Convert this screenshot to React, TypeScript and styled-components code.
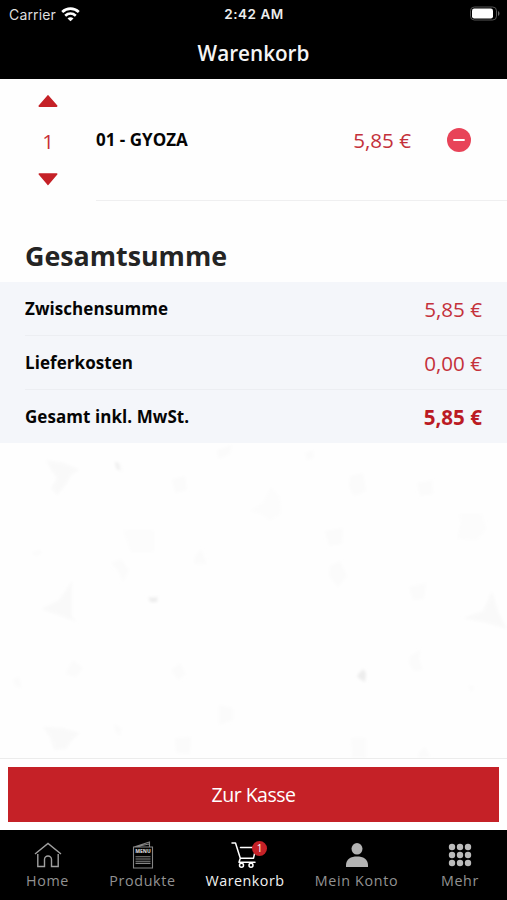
import React from "react";
import styled, { createGlobalStyle } from "styled-components";

const GlobalStyle = createGlobalStyle`
  * { box-sizing: border-box; }
  body { margin: 0; background: #fefefe; }
`;

const Screen = styled.div`
  width: 507px;
  height: 900px;
  display: flex;
  flex-direction: column;
  overflow: hidden;
  background: #fefefe;
  font-family: "Open Sans", sans-serif;
  color: #050505;
`;

const Header = styled.header`
  height: 79px;
  flex: none;
  background: #000;
  color: #fff;
`;

const StatusBar = styled.div`
  height: 27px;
  padding: 0 7px 0 9px;
  display: grid;
  grid-template-columns: 1fr auto 1fr;
  align-items: center;
  font: 14px/27px Inter, sans-serif;
`;

const Carrier = styled.span`
  display: flex;
  align-items: center;
  gap: 5px;
  color: #dedede;
  letter-spacing: 0.15px;
`;

const Clock = styled.span`
  padding: 1px 1px 0 0;
  font-weight: 600;
  font-size: 13.5px;
  letter-spacing: 0.55px;
  color: #ececec;
`;

const Battery = styled.svg`
  justify-self: end;
`;

const Title = styled.h1`
  margin: 0;
  height: 52px;
  text-align: center;
  font-size: 20.7px;
  font-weight: 600;
  line-height: 53px;
  color: #f5f5f5;
`;

const CartItem = styled.section`
  height: 122px;
  flex: none;
  display: flex;
  background: #fefefe;
`;

const Stepper = styled.div`
  width: 96px;
  display: flex;
  flex-direction: column;
  align-items: center;
  padding-top: 15px;
`;

const ArrowButton = styled.button`
  width: 22px;
  height: 14px;
  padding: 0;
  border: 0;
  background: none;
  display: flex;
  justify-content: center;
  align-items: center;
`;

const Quantity = styled.span`
  height: 64px;
  line-height: 66px;
  font-size: 20.5px;
  color: #c92f38;
`;

const ItemBody = styled.div`
  flex: 1;
  display: flex;
  align-items: center;
  border-bottom: 1px solid #efeff0;
  padding-right: 36px;
`;

const ItemName = styled.span`
  flex: 1;
  font-size: 17px;
  font-weight: 700;
  letter-spacing: 0;
`;

const Price = styled.span<{ $strong?: boolean }>`
  font-size: 20.6px;
  padding-top: 1px;
  line-height: 30px;
  font-weight: ${(p) => (p.$strong ? 700 : 400)};
  color: ${(p) => (p.$strong ? "#bb1b24" : "#c4313b")};
`;

const RemoveButton = styled.button`
  width: 24px;
  height: 24px;
  margin-left: 36px;
  padding: 0;
  border: 0;
  border-radius: 50%;
  background: #e84358;
  display: flex;
  align-items: center;
  justify-content: center;
`;

const Heading = styled.h2`
  margin: 0;
  height: 81px;
  flex: none;
  padding: 36px 25px 0;
  font-size: 26.8px;
  line-height: 38px;
  font-weight: 700;
  color: #242424;
`;

const Totals = styled.section`
  height: 161px;
  flex: none;
  padding-left: 25px;
  background: #f4f6fa;
`;

const TotalRow = styled.div`
  height: 54px;
  padding-right: 25px;
  display: flex;
  align-items: center;
  justify-content: space-between;
  border-bottom: 1px solid #eceef2;
  &:last-child { height: 53px; border-bottom: 0; }
`;

const TotalLabel = styled.span`
  padding-bottom: 1px;
  font-size: 17px;
  letter-spacing: 0.06px;
  font-weight: 700;
`;

const Pattern = styled.div`
  flex: 1;
  min-height: 0;
  background: #fefefe;
  svg { display: block; }
`;

const Checkout = styled.div`
  height: 72px;
  flex: none;
  padding: 8px;
  border-top: 1px solid #ececec;
  background: #fff;
`;

const CheckoutButton = styled.button`
  width: 100%;
  height: 55px;
  padding: 0;
  border: 0;
  background: #c52127;
  color: #fff;
  font: 19.5px "Open Sans", sans-serif;
  letter-spacing: -0.5px;
`;

const TabBar = styled.nav`
  height: 70px;
  flex: none;
  display: grid;
  grid-template-columns: 95px 95px 110px 113px 94px;
  background: #000;
`;

const Tab = styled.a<{ $active?: boolean }>`
  display: flex;
  flex-direction: column;
  align-items: center;
  padding-top: 8px;
  font-size: 14.3px;
  line-height: 20px;
  letter-spacing: ${(p) => (p.$active ? "0.5px" : "0.65px")};
  white-space: nowrap;
  color: ${(p) => (p.$active ? "#f2f2f2" : "#929292")};
`;

const IconBox = styled.span`
  position: relative;
  height: 33px;
  display: flex;
  align-items: center;
`;

const Badge = styled.span`
  position: absolute;
  left: 21px;
  top: 3px;
  width: 15px;
  height: 15px;
  border-radius: 50%;
  background: #c52127;
  color: #fff;
  font-size: 10px;
  line-height: 15px;
  letter-spacing: 0;
  text-align: center;
`;

const totals = [
  { label: "Zwischensumme", price: "5,85 €" },
  { label: "Lieferkosten", price: "0,00 €" },
  { label: "Gesamt inkl. MwSt.", price: "5,85 €", strong: true },
];

const WifiIcon = () => (
  <svg width="19" height="15" viewBox="0 0 19 15" fill="none" stroke="#fff" strokeWidth="2.7">
    <path d="M1.2 5C6 .6 13 .6 17.8 5M4.2 8.7c3.2-2.8 7.4-2.8 10.6 0" />
    <path d="M6.5 11.4c1.8-1.5 4.2-1.5 6 0l-3 2.8Z" fill="#fff" stroke="none" />
  </svg>
);

const Arrow = ({ down = false }: { down?: boolean }) => (
  <svg width="20" height="13" viewBox="0 0 20 13" fill="#c52127" stroke="#c52127" strokeWidth="1.6" strokeLinejoin="round">
    <path d={down ? "M1.3 1.1h17.4L10 11.3Z" : "M1.3 11.1h17.4L10 .9Z"} />
  </svg>
);

const HomeIcon = () => (
  <svg width="28" height="26" viewBox="0 0 28 26" fill="none" stroke="#a0a0a0" strokeWidth="1.4">
    <path d="M1 12 14 1.5 27 12M3.8 12v12.5h6.7v-7a3.5 3.5 0 0 1 7 0v7h6.7V12" />
  </svg>
);

const MenuIcon = () => (
  <svg width="22" height="28" viewBox="0 0 22 28" fill="none" stroke="#858585" strokeWidth="1.1">
    <path d="M1.5 6h19v21h-19ZM2 6 17.5 1v5M5 5.5 17 3M3.5 15.8h15M3.5 18h15M3.5 20.2h15M3.5 22.4h15" />
    <text x="11" y="12.4" textAnchor="middle" fill="#c4c4c4" stroke="none" fontFamily="Open Sans" fontSize="5" letterSpacing="0" fontWeight="800">MENU</text>
  </svg>
);

const CartIcon = () => (
  <svg width="28" height="28" viewBox="0 0 28 28" fill="none" stroke="#fff" strokeWidth="1.5" strokeLinecap="round" strokeLinejoin="round">
    <path d="M1 2h3.5L9.3 17.2h13.2M9.5 6.5H25l-2.5 10.7M9.3 17.2 8 21.2h16" />
    <circle cx="10.5" cy="24.2" r="2" />
    <circle cx="20" cy="24.2" r="2" />
  </svg>
);

const PersonIcon = () => (
  <svg width="22" height="24" viewBox="0 0 22 24" fill="#b3b3b3">
    <ellipse cx="11" cy="5.8" rx="5.5" ry="5.8" />
    <path d="M0 24v-2c0-6 5-8.5 11-8.5S22 16 22 22v2Z" />
  </svg>
);

const GridIcon = () => (
  <svg width="24" height="24" viewBox="0 0 24 24" fill="#bbb">
    {[4, 12, 20].flatMap((y) => [4, 12, 20].map((x) => <circle key={`${x}-${y}`} cx={x} cy={y} r="3.2" />))}
  </svg>
);

const PatternArt = () => (
  <svg width="507" height="316" viewBox="0 -1 507 316" fill="#fbfbfb">
    <defs><filter id="soft"><feGaussianBlur stdDeviation="1.4" /></filter></defs>
    <g filter="url(#soft)">
      <path d="m46 16 18 3 16 7-8 4-7 12-8 9-6-7 6-10-6-8ZM41 165l18-9 13-19v36l5 5-16-6ZM43 283l20 1 17 5-8 7-6 9-12 1-4-13ZM463 174l20-7 9-20 6 20 9 18-20-6Z" fill="#f9f9f9" />
      <path d="M250 67l13-8 8-16 9 10 1 16-11 8-8-7ZM459 70h23l4 15-9 11-20-1 4-16ZM123 86h31v22h-23Z" fill="#fcfcfc" />
      <path d="m114 17 7 2 2 9-6-2ZM31 109l9-3 2 3-6 3ZM147 152l6 2 5-3v7h-8ZM111 119l10-4 8 11-6 12-6-13ZM350 32l13-3 3 18-12 5-5-9ZM417 39l15-3 1 14-13 2ZM409 143l17-4-2 16-11 1ZM410 212l11-6-2 8 4 12-9 1-5-8ZM330 122l10-5 7 15-9 11-9-11ZM325 87l18-3-1 16-13 2ZM195 112l6-7 6 15h-13ZM65 230l8-14 10 8-7 9ZM171 226l9-7 6 11-8 6ZM219 261l14 3v12l-14 5ZM172 35l13-3 2 14-12 3ZM217 6l15-5-2 9-12 5ZM305 9l8-3 1 7-7 4ZM114 280l8 4-2 8-5-4ZM175 294l16-1-1 17-14-1ZM351 294h15v20h-14ZM419 308l6-5 6 10-13 1ZM13 235l6-2 3 11-7-2ZM468 241l7 2-4 5Z" />
      <path d="m357 232 6-7 3 4-1 9-5-3ZM149 153l4 1 4-1v5h-7ZM115 18l3 1 2 7-3-1Z" fill="#ececec" />
    </g>
  </svg>
);

export default function App() {
  return (
    <Screen>
      <GlobalStyle />
      <Header>
        <StatusBar>
          <Carrier>Carrier <WifiIcon /></Carrier>
          <Clock>2:42 AM</Clock>
          <Battery width="31" height="16" viewBox="0 0 31 16">
            <rect x="1.5" y="1" width="26" height="13" rx="3.8" fill="none" stroke="#555" />
            <rect x="3" y="2.5" width="21" height="10" rx="2.2" fill="#fff" />
            <path d="M29 5c2 1 2 4 0 5Z" fill="#666" />
          </Battery>
        </StatusBar>
        <Title>Warenkorb</Title>
      </Header>
      <CartItem>
        <Stepper>
          <ArrowButton aria-label="Mehr"><Arrow /></ArrowButton>
          <Quantity>1</Quantity>
          <ArrowButton aria-label="Weniger"><Arrow down /></ArrowButton>
        </Stepper>
        <ItemBody>
          <ItemName>01 - GYOZA</ItemName>
          <Price>5,85 €</Price>
          <RemoveButton aria-label="Entfernen">
            <svg width="12" height="4" viewBox="0 0 12 4"><path d="M1 2h10" stroke="#fff" strokeWidth="1.8" strokeLinecap="round" /></svg>
          </RemoveButton>
        </ItemBody>
      </CartItem>
      <Heading>Gesamtsumme</Heading>
      <Totals>
        {totals.map((row) => (
          <TotalRow key={row.label}>
            <TotalLabel>{row.label}</TotalLabel>
            <Price $strong={row.strong}>{row.price}</Price>
          </TotalRow>
        ))}
      </Totals>
      <Pattern><PatternArt /></Pattern>
      <Checkout><CheckoutButton>Zur Kasse</CheckoutButton></Checkout>
      <TabBar>
        <Tab><IconBox><HomeIcon /></IconBox>Home</Tab>
        <Tab><IconBox><MenuIcon /></IconBox>Produkte</Tab>
        <Tab $active><IconBox><CartIcon /><Badge>1</Badge></IconBox>Warenkorb</Tab>
        <Tab><IconBox><PersonIcon /></IconBox>Mein Konto</Tab>
        <Tab><IconBox><GridIcon /></IconBox>Mehr</Tab>
      </TabBar>
    </Screen>
  );
}
